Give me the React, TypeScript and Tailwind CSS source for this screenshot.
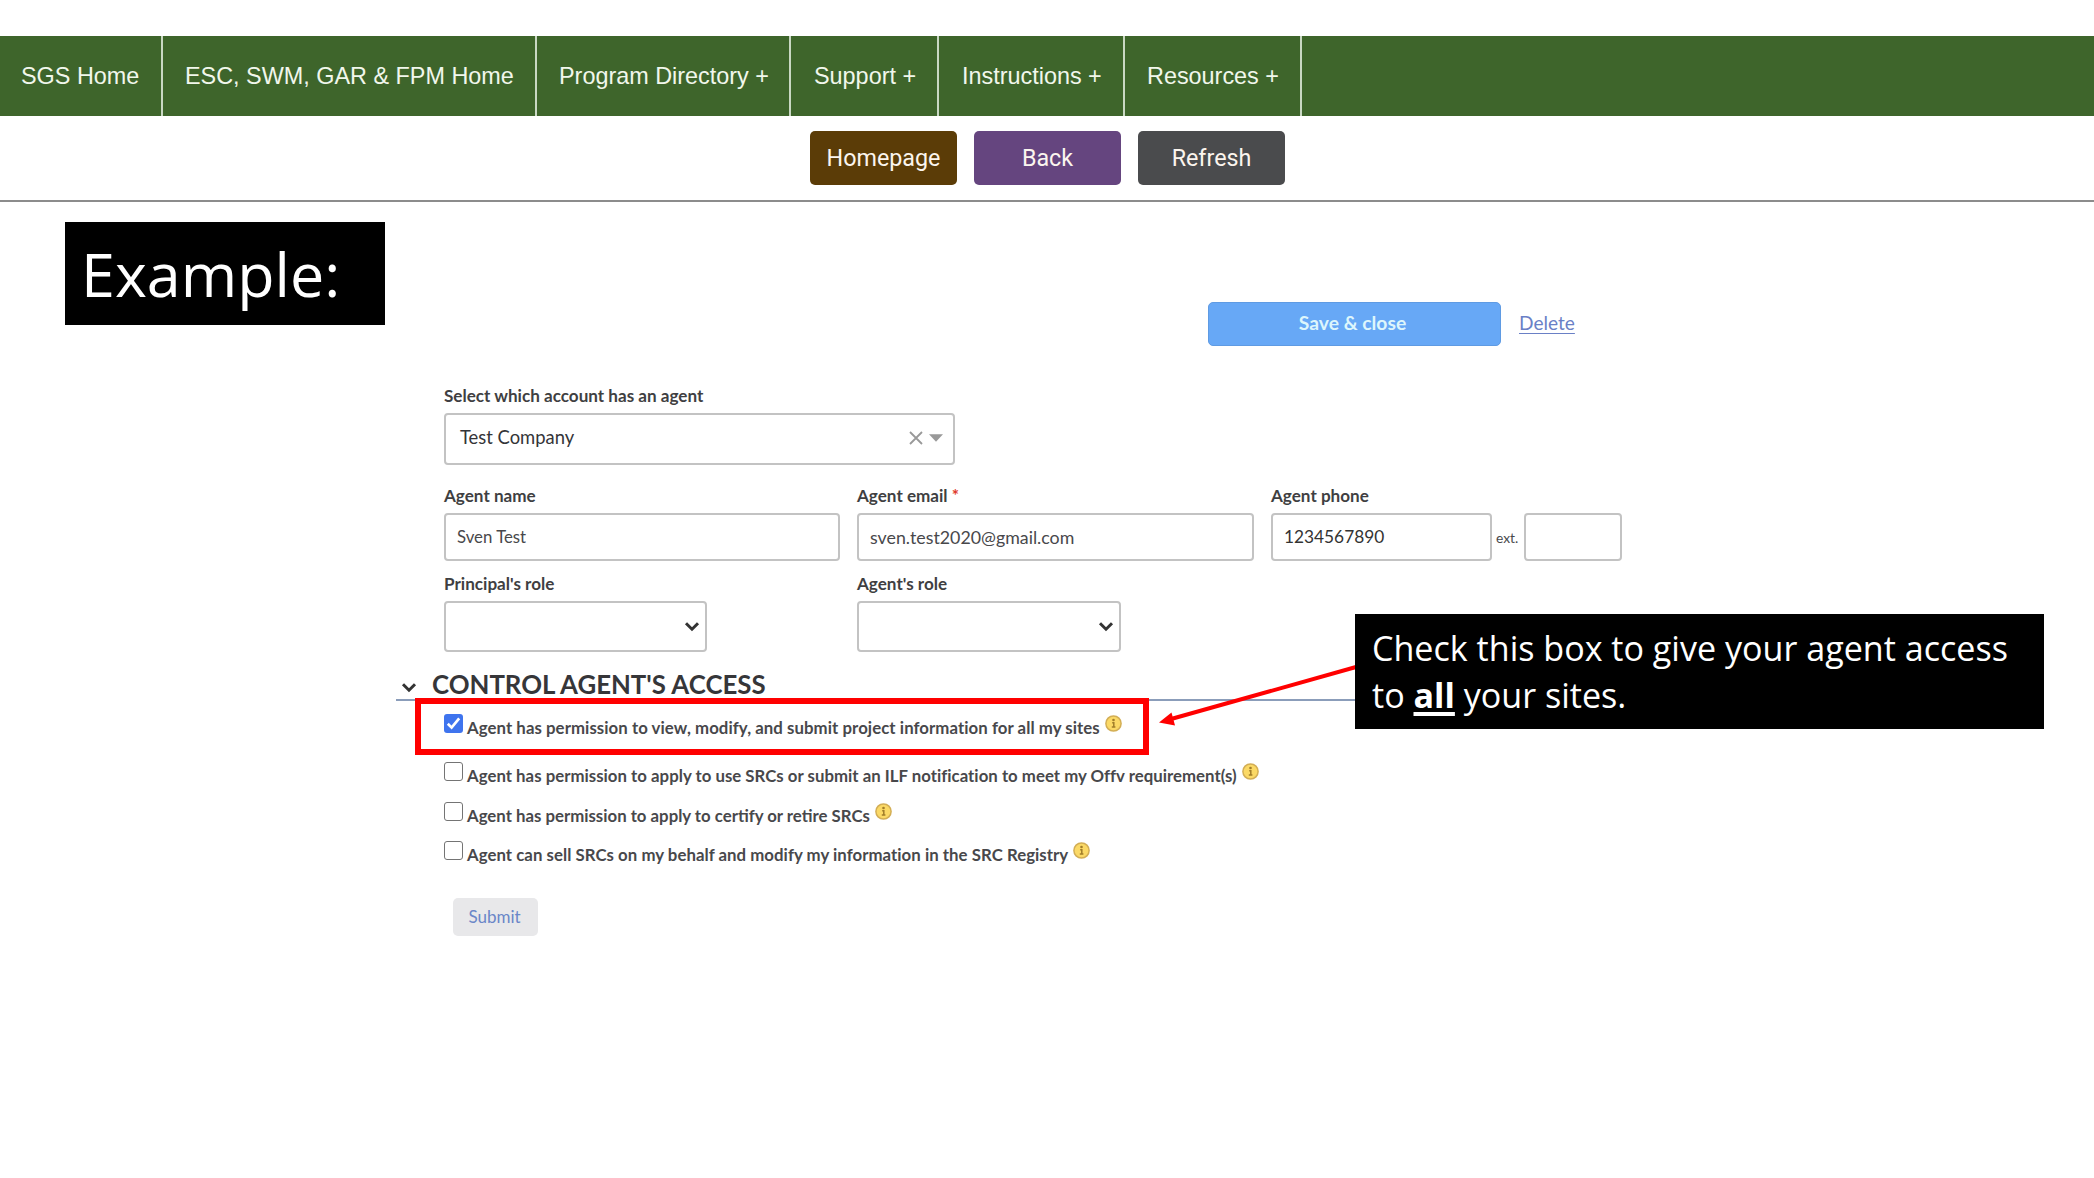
import React from "react";

const NAV = [
  { label: "SGS Home", box: "w-[163px] pl-[21px]" },
  { label: "ESC, SWM, GAR & FPM Home", box: "w-[374px] pl-[22px]" },
  { label: "Program Directory +", box: "w-[254px] pl-[22px]" },
  { label: "Support +", box: "w-[148px] pl-[23px]" },
  { label: "Instructions +", box: "w-[186px] pl-[23px]" },
  { label: "Resources +", box: "w-[177px] pl-[22px]" },
];

const PERMISSIONS = [
  {
    text: "Agent has permission to view, modify, and submit project information for all my sites",
    checked: true,
    row: "mt-[14px] tracking-[0.06px]",
  },
  {
    text: "Agent has permission to apply to use SRCs or submit an ILF notification to meet my Offv requirement(s)",
    checked: false,
    row: "mt-[24px] tracking-[0.02px]",
  },
  {
    text: "Agent has permission to apply to certify or retire SRCs",
    checked: false,
    row: "mt-[16px]",
  },
  {
    text: "Agent can sell SRCs on my behalf and modify my information in the SRC Registry",
    checked: false,
    row: "mt-[15px] tracking-[0.04px]",
  },
];

const FIELD = "rounded-[4px] border-2 border-[#c3c3c3] bg-white";

function Label({ children, className = "" }: { children: React.ReactNode; className?: string }) {
  return (
    <div className={`h-6 whitespace-nowrap text-[17.1px] leading-6 font-bold text-[#3f3f42] ${className}`}>
      {children}
    </div>
  );
}

function Chevron({ className = "" }: { className?: string }) {
  return (
    <svg className={className} width="16" height="11" viewBox="0 0 16 11" fill="none">
      <path d="M2 2.2 8 8.2l6-6" stroke="#333" strokeWidth="3" />
    </svg>
  );
}

function SelectBox({ className = "" }: { className?: string }) {
  return (
    <div className={`${FIELD} flex h-[51px] items-center justify-end pr-[5px] ${className}`}>
      <Chevron />
    </div>
  );
}

function InfoIcon() {
  return (
    <svg width="17" height="17" viewBox="0 0 17 17" className="ml-[5px] shrink-0">
      <circle cx="8.5" cy="8.5" r="7.6" fill="#fbd966" stroke="#d3ae55" strokeWidth="1.5" />
      <circle cx="8.5" cy="5" r="1.3" fill="#a17d2a" />
      <path d="M7.2 7.8h1.6v4M6.8 12h3.6" stroke="#a17d2a" strokeWidth="1.5" fill="none" />
    </svg>
  );
}

function Checkbox({ checked }: { checked: boolean }) {
  return (
    <span
      className={`-mt-px flex size-[19px] shrink-0 items-center justify-center rounded-[3px] ${
        checked ? "bg-[#3f74ee]" : "border-[1.5px] border-[#747474] bg-white"
      }`}
    >
      {checked && (
        <svg width="19" height="19" viewBox="0 0 19 19" fill="none">
          <path d="M3.8 9.8 7.6 13.6 15.2 4.4" stroke="#fff" strokeWidth="2.7" />
        </svg>
      )}
    </span>
  );
}

export default function App() {
  return (
    <div className="relative h-[1178px] w-[2094px] overflow-hidden bg-white pt-9 font-['Lato',sans-serif]">
      <nav className="flex h-20 bg-[#3e652b] font-['Liberation_Sans',Arial,sans-serif] text-[23.4px] text-[#f1f7ec]">
        {NAV.map((n) => (
          <a
            key={n.label}
            className={`flex h-full shrink-0 items-center border-r-2 border-[#c9d8c3] pt-[2px] whitespace-nowrap ${n.box}`}
          >
            {n.label}
          </a>
        ))}
      </nav>

      <div className="flex h-[86px] justify-center gap-[18px] border-b-2 border-[#8c8c8c] pt-[15px] pl-px font-['Roboto',sans-serif] text-[23.3px] text-[#fbf5ee]">
        <button className="h-[54px] w-[147px] rounded-[5px] bg-[#5b3c07]">Homepage</button>
        <button className="-ml-px h-[54px] w-[147px] rounded-[5px] bg-[#65457f]">Back</button>
        <button className="-ml-px h-[54px] w-[147px] rounded-[5px] bg-[#4a4b4d]">Refresh</button>
      </div>

      <main className="ml-[396px] w-[1227px] pt-[100px]">
        <div className="ml-[812px] flex h-11 items-center gap-[18px]">
          <button className="h-11 w-[293px] rounded-[5px] border border-[#5f9be3] bg-[#67a8f6] pr-1 pb-px text-[19.3px] font-bold text-[#ddf6fc]">
            Save &amp; close
          </button>
          <a className="pb-px text-[19.1px] text-[#6a80c6] underline decoration-1 underline-offset-[3px]">Delete</a>
        </div>

        <div className="ml-12">
          <Label className="mt-[38px]">Select which account has an agent</Label>
          <div className={`${FIELD} mt-[5px] flex h-[52px] w-[511px] items-center pr-[10px] pb-[2px] pl-[14px]`}>
            <span className="grow text-[18.4px] text-[#343438]">Test Company</span>
            <svg width="14" height="14" viewBox="0 0 14 14" className="mr-[6px]">
              <path d="M1 1l12 12M13 1 1 13" stroke="#999" strokeWidth="1.8" />
            </svg>
            <svg width="14" height="8" viewBox="0 0 14 8">
              <path d="M0 0.3h14L7 7.7z" fill="#999" />
            </svg>
          </div>

          <div className="mt-[19px] flex text-[#48484b]">
            <div className="w-[413px]">
              <Label>Agent name</Label>
              <div className={`${FIELD} mt-[5px] h-12 w-[396px] pl-[11px] text-[16.8px] leading-[44px]`}>Sven Test</div>
            </div>
            <div className="w-[414px]">
              <Label>
                Agent email <span className="text-[#e0392b]">*</span>
              </Label>
              <div className={`${FIELD} mt-[5px] h-12 w-[397px] pl-[11px] text-[17.8px] leading-[44px]`}>
                sven.test2020@gmail.com
              </div>
            </div>
            <div>
              <Label>Agent phone</Label>
              <div className="mt-[5px] flex items-center">
                <div className={`${FIELD} h-12 w-[221px] pl-[11px] text-[17.3px] leading-[44px] text-[#333]`}>
                  1234567890
                </div>
                <span className="w-8 pt-[3px] pl-1 text-[13.8px]">ext.</span>
                <div className={`${FIELD} h-12 w-[98px]`} />
              </div>
            </div>
          </div>

          <div className="mt-[11px] flex">
            <div className="w-[413px]">
              <Label>Principal's role</Label>
              <SelectBox className="mt-[5px] w-[263px]" />
            </div>
            <div>
              <Label>Agent's role</Label>
              <SelectBox className="mt-[5px] w-[264px]" />
            </div>
          </div>
        </div>

        <h2 className="mt-[17px] flex h-8 items-start border-b-2 border-[#8b9dba] text-[25.8px] leading-[31px] font-bold text-[#363639]">
          <Chevron className="mt-[13px] mr-[15px] ml-[5px]" />
          CONTROL AGENT'S ACCESS
        </h2>

        <div className="ml-12">
          {PERMISSIONS.map((p) => (
            <div
              key={p.text}
              className={`flex h-6 items-start whitespace-nowrap text-[16.8px] leading-[25px] font-bold text-[#48484b] ${p.row}`}
            >
              <Checkbox checked={p.checked} />
              <span className="ml-1">{p.text}</span>
              <InfoIcon />
            </div>
          ))}
          <button className="mt-[32px] ml-[9px] block h-[38px] w-[85px] rounded-[5px] bg-[#e8e8ea] pr-[2px] text-[17px] text-[#6a86c8]">
            Submit
          </button>
        </div>
      </main>

      {/* Slide annotations laid over the form */}
      <div className="absolute top-[222px] left-[65px] h-[103px] w-[320px] bg-black pl-4 font-['Open_Sans',sans-serif] text-[61px] leading-[103px] text-white">
        Example:
      </div>
      <div className="absolute top-[698px] left-[415px] h-[57px] w-[734px] border-[6px] border-[#ff0000]" />
      <svg className="absolute top-[655px] left-[1150px]" width="210" height="80" viewBox="0 0 210 80">
        <path d="M22 63.8 206 12" stroke="#ff0000" strokeWidth="4" />
        <path d="M9 67.5 21.5 57.5 25 70.5z" fill="#ff0000" />
      </svg>
      <div className="absolute top-[614px] left-[1355px] h-[115px] w-[689px] bg-black pt-[11px] pl-[17px] font-['Open_Sans',sans-serif] text-[34.1px] leading-[47px] whitespace-nowrap text-white">
        Check this box to give your agent access
        <br />
        to <b className="underline decoration-[4px] underline-offset-[4px]">all</b> your sites.
      </div>
    </div>
  );
}
